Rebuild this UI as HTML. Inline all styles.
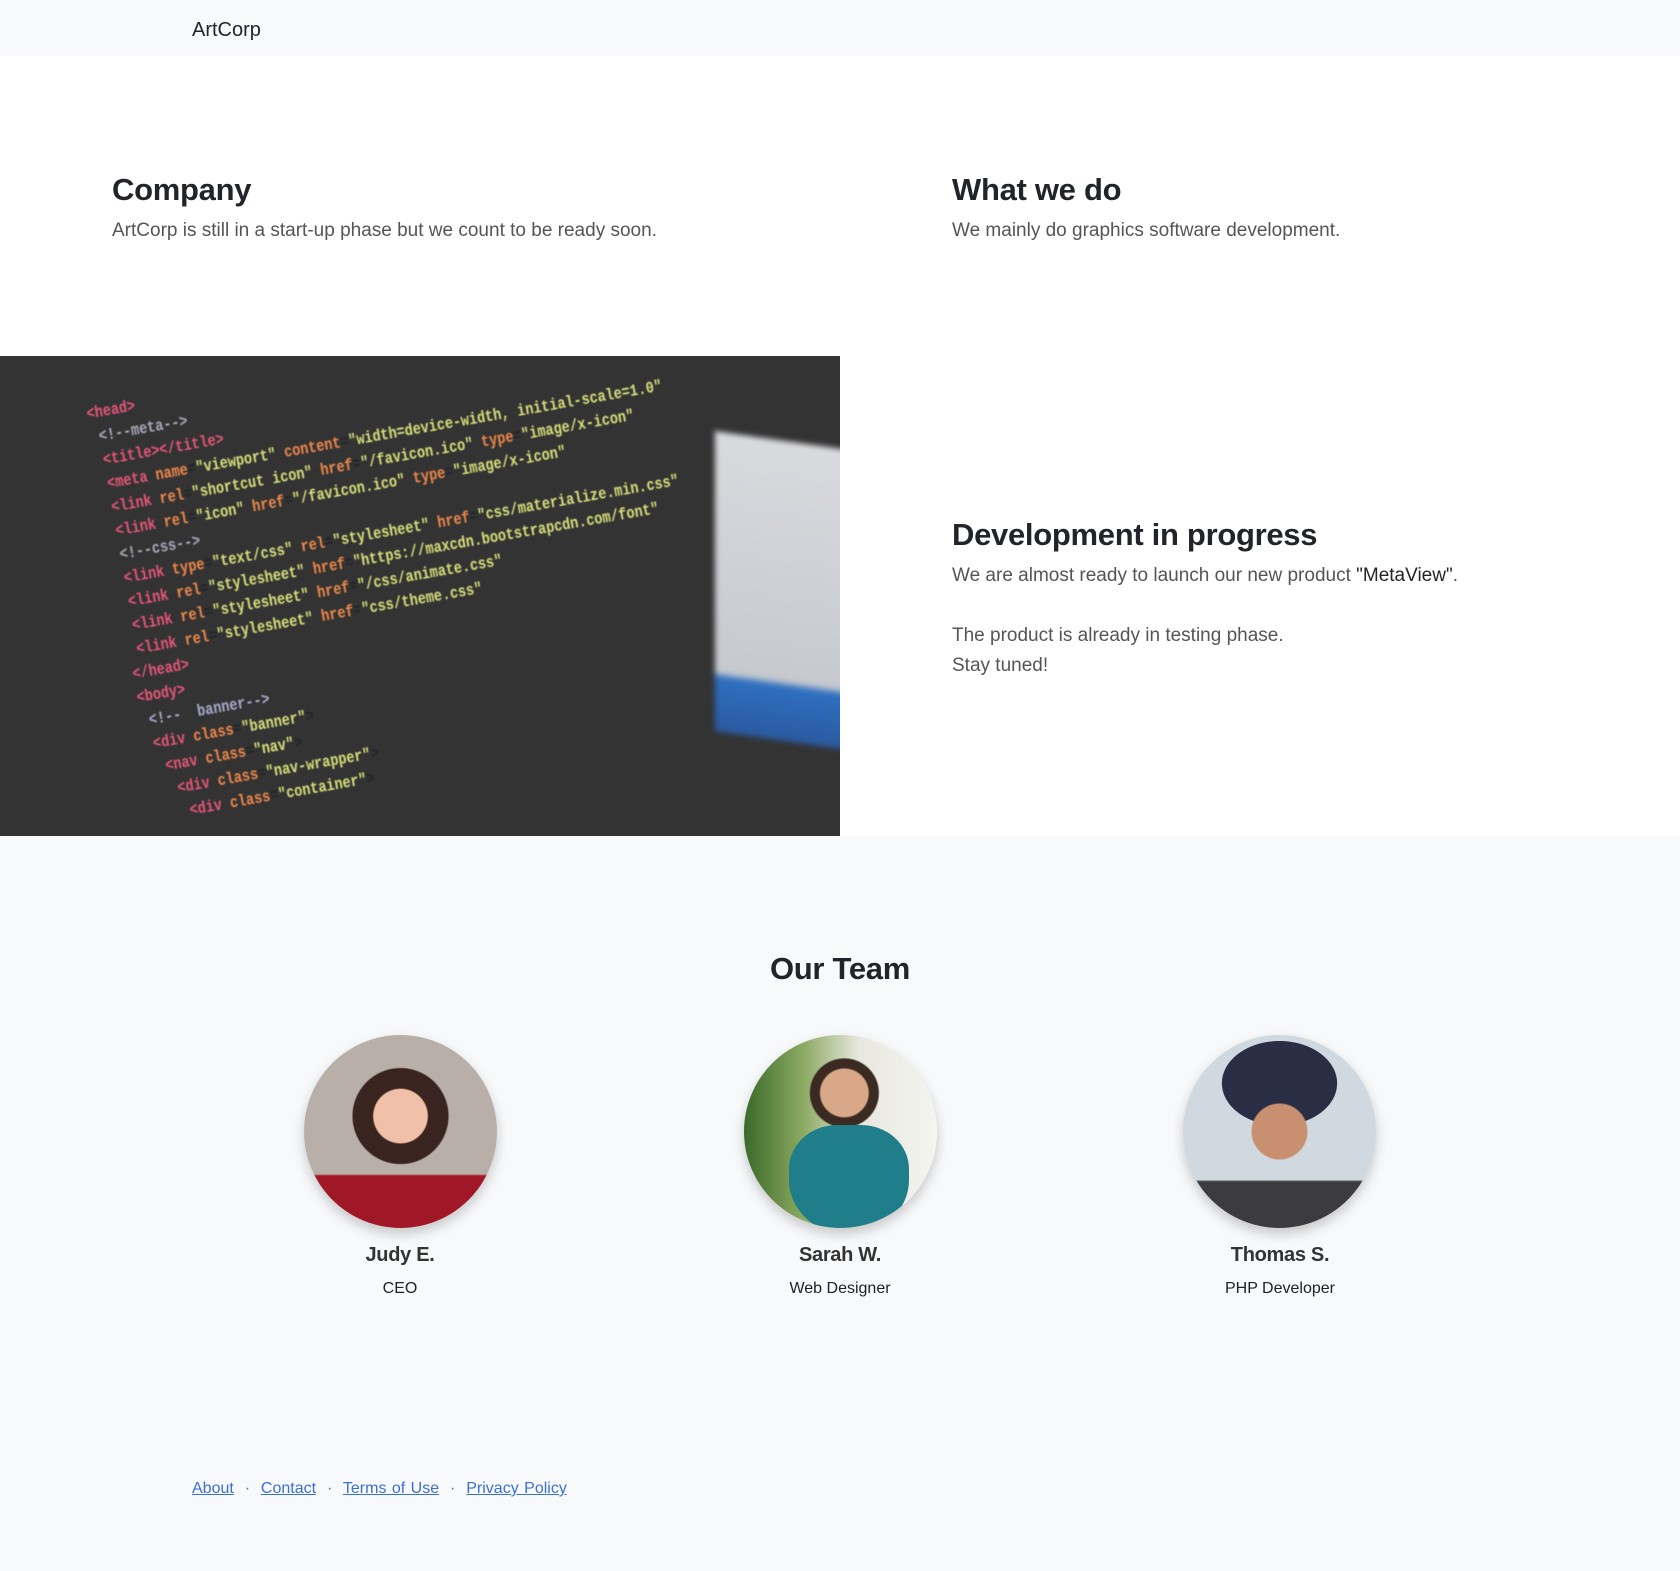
<!DOCTYPE html>
<html><head><meta charset="utf-8"><style>
*{margin:0;padding:0;box-sizing:border-box}
body{width:1680px;height:1571px;font-family:"Liberation Sans",sans-serif;color:#212529;background:#fff;position:relative;overflow:hidden}
.nav{position:absolute;left:0;top:0;width:1680px;height:56px;background:#f8f9fa}
.brand{position:absolute;left:192px;top:19px;font-size:20px;color:#212529}
h2{position:absolute;font-size:31px;font-weight:bold;letter-spacing:-0.3px}
p.l{position:absolute;font-size:19px;color:#555;font-weight:300}
.img{position:absolute;left:0;top:356px;width:840px;height:480px;background:#333;overflow:hidden}
.team{position:absolute;left:0;top:836px;width:1680px;height:735px;background:#f8f9fa}
.av{position:absolute;top:1035px;width:193px;height:193px;border-radius:50%;box-shadow:0 6px 12px rgba(0,0,0,.2);overflow:hidden}
.nm{position:absolute;top:1244px;width:300px;text-align:center;font-size:20px;font-weight:bold;color:#333;letter-spacing:-0.3px}
.rl{position:absolute;top:1280px;width:300px;text-align:center;font-size:16px;color:#222}
.ft{position:absolute;left:192px;top:1480px;font-size:16px;color:#6c757d;word-spacing:1px}
.ft a{color:#3b6fd8;text-decoration:underline}
.code{position:absolute;font-family:"Liberation Mono",monospace;font-weight:bold;white-space:nowrap;transform-origin:0 0}
</style></head><body>
<div class="nav"><div class="brand">ArtCorp</div></div>
<h2 style="left:112px;top:172px">Company</h2>
<p class="l" style="left:112px;top:220px">ArtCorp is still in a start-up phase but we count to be ready soon.</p>
<h2 style="left:952px;top:172px">What we do</h2>
<p class="l" style="left:952px;top:220px">We mainly do graphics software development.</p>
<div class="img">
<div style="position:absolute;left:715px;top:85px;width:140px;height:300px;background:linear-gradient(#d8dade,#c6c9ce 80%,#2f6fc0 82%,#2a5aa0);transform:skewY(8deg);filter:blur(3px)"></div>
<div class="code" style="left:85px;top:48px;transform:rotate(-10deg) scaleX(0.8);font-size:17px;line-height:24px;filter:blur(.6px)">
<div><span style="color:#e8557a">&lt;head&gt;</span></div>
<div style="color:#aab">&nbsp;&lt;!--meta--&gt;</div>
<div>&nbsp;<span style="color:#e8557a">&lt;title&gt;&lt;/title&gt;</span></div>
<div>&nbsp;<span style="color:#e8557a">&lt;meta</span> <span style="color:#f0884a">name</span>=<span style="color:#d8e07a">"viewport"</span> <span style="color:#f0884a">content</span>=<span style="color:#d8e07a">"width=device-width, initial-scale=1.0"</span></div>
<div>&nbsp;<span style="color:#e8557a">&lt;link</span> <span style="color:#f0884a">rel</span>=<span style="color:#d8e07a">"shortcut icon"</span> <span style="color:#f0884a">href</span>=<span style="color:#d8e07a">"/favicon.ico"</span> <span style="color:#f0884a">type</span>=<span style="color:#d8e07a">"image/x-icon"</span></div>
<div>&nbsp;<span style="color:#e8557a">&lt;link</span> <span style="color:#f0884a">rel</span>=<span style="color:#d8e07a">"icon"</span> <span style="color:#f0884a">href</span>=<span style="color:#d8e07a">"/favicon.ico"</span> <span style="color:#f0884a">type</span>=<span style="color:#d8e07a">"image/x-icon"</span></div>
<div style="color:#aab">&nbsp;&lt;!--css--&gt;</div>
<div>&nbsp;<span style="color:#e8557a">&lt;link</span> <span style="color:#f0884a">type</span>=<span style="color:#d8e07a">"text/css"</span> <span style="color:#f0884a">rel</span>=<span style="color:#d8e07a">"stylesheet"</span> <span style="color:#f0884a">href</span>=<span style="color:#d8e07a">"css/materialize.min.css"</span></div>
<div>&nbsp;<span style="color:#e8557a">&lt;link</span> <span style="color:#f0884a">rel</span>=<span style="color:#d8e07a">"stylesheet"</span> <span style="color:#f0884a">href</span>=<span style="color:#d8e07a">"https://maxcdn.bootstrapcdn.com/font"</span></div>
<div>&nbsp;<span style="color:#e8557a">&lt;link</span> <span style="color:#f0884a">rel</span>=<span style="color:#d8e07a">"stylesheet"</span> <span style="color:#f0884a">href</span>=<span style="color:#d8e07a">"/css/animate.css"</span></div>
<div>&nbsp;<span style="color:#e8557a">&lt;link</span> <span style="color:#f0884a">rel</span>=<span style="color:#d8e07a">"stylesheet"</span> <span style="color:#f0884a">href</span>=<span style="color:#d8e07a">"css/theme.css"</span></div>
<div><span style="color:#e8557a">&lt;/head&gt;</span></div>
<div><span style="color:#e8557a">&lt;body&gt;</span></div>
<div style="color:#aac">&nbsp;&lt;!-- &nbsp;banner--&gt;</div>
<div>&nbsp;<span style="color:#e8557a">&lt;div</span> <span style="color:#f0884a">class</span>=<span style="color:#d8e07a">"banner"</span>&gt;</div>
<div>&nbsp;&nbsp;<span style="color:#e8557a">&lt;nav</span> <span style="color:#f0884a">class</span>=<span style="color:#d8e07a">"nav"</span>&gt;</div>
<div>&nbsp;&nbsp;&nbsp;<span style="color:#e8557a">&lt;div</span> <span style="color:#f0884a">class</span>=<span style="color:#d8e07a">"nav-wrapper"</span>&gt;</div>
<div>&nbsp;&nbsp;&nbsp;&nbsp;<span style="color:#e8557a">&lt;div</span> <span style="color:#f0884a">class</span>=<span style="color:#d8e07a">"container"</span>&gt;</div>
</div>
</div>
<h2 style="left:952px;top:517px">Development in progress</h2>
<p class="l" style="left:952px;top:565px">We are almost ready to launch our new product <span style="color:#212529;font-weight:normal">"MetaView"</span>.</p>
<p class="l" style="left:952px;top:625px">The product is already in testing phase.</p>
<p class="l" style="left:952px;top:655px">Stay tuned!</p>
<div class="team"></div>
<h2 style="left:0;width:1680px;text-align:center;top:951px">Our Team</h2>
<div class="av" style="left:304px;background:radial-gradient(circle at 50% 42%,#f0c0a8 0 18%,#3a2420 19% 32%,transparent 33%),linear-gradient(#b8b0a8 0 72%,#a01828 73%)"></div>
<div class="av" style="left:744px;background:radial-gradient(circle at 52% 30%,#d8a888 0 14%,#3a2a22 15% 20%,transparent 21%),linear-gradient(90deg,#3a6a2a,#8aa860 30%,#e8e8e0 60%,#f4f4f0);"><div style="position:absolute;left:45px;top:90px;width:120px;height:110px;border-radius:40% 40% 50% 50%;background:#1f7e8a"></div></div>
<div class="av" style="left:1183px;background:radial-gradient(circle at 50% 50%,#c89070 0 20%,transparent 21%),radial-gradient(ellipse 30% 22% at 50% 25%,#2a2e44 0 99%,transparent 100%),linear-gradient(#d0d8e0 0 75%,#3c3c40 76%)"></div>
<div class="nm" style="left:250px">Judy E.</div><div class="rl" style="left:250px">CEO</div>
<div class="nm" style="left:690px">Sarah W.</div><div class="rl" style="left:690px">Web Designer</div>
<div class="nm" style="left:1130px">Thomas S.</div><div class="rl" style="left:1130px">PHP Developer</div>
<div class="ft"><a>About</a> &nbsp;·&nbsp; <a>Contact</a> &nbsp;·&nbsp; <a>Terms of Use</a> &nbsp;·&nbsp; <a>Privacy Policy</a></div>
</body></html>
